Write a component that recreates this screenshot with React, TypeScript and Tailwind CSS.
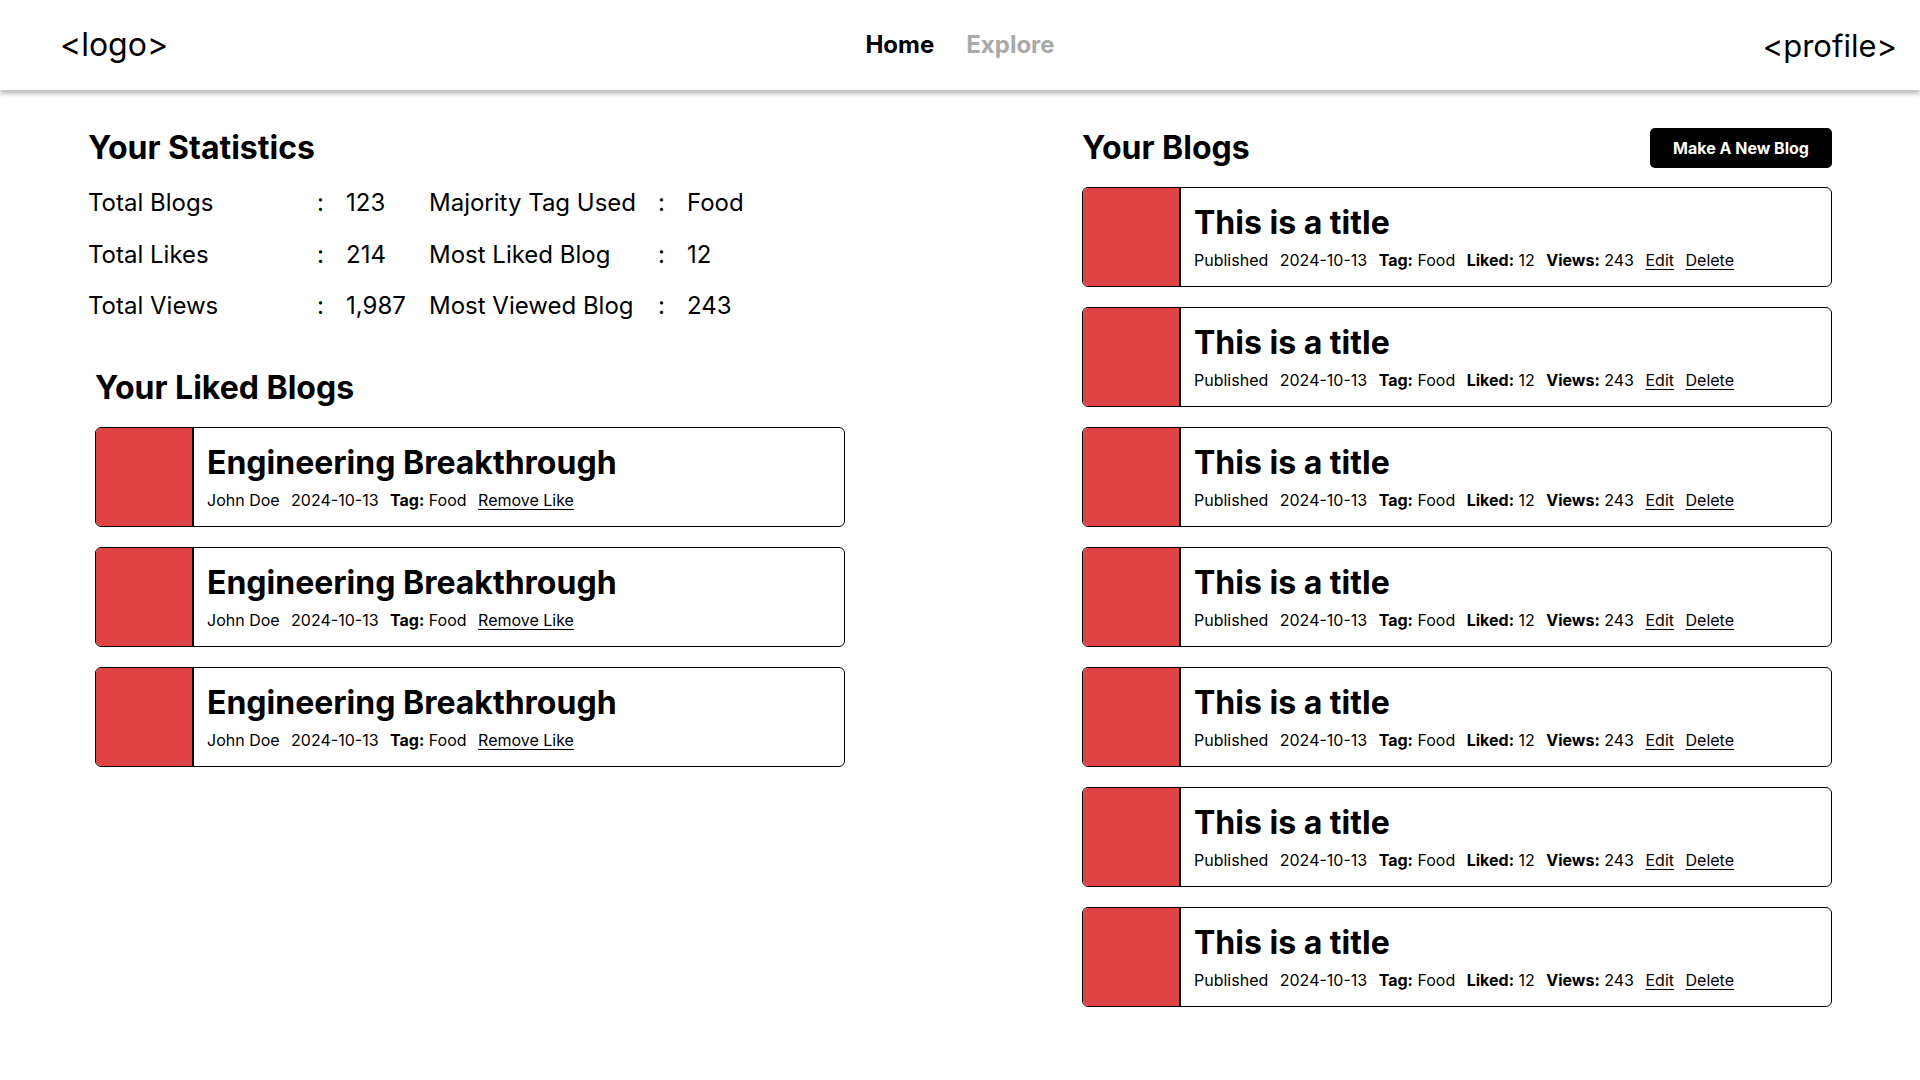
const stats = [
  ['Total Blogs', '123', 'Majority Tag Used', 'Food'],
  ['Total Likes', '214', 'Most Liked Blog', '12'],
  ['Total Views', '1,987', 'Most Viewed Blog', '243'],
]

function Card({ title, children }: { title: string; children: React.ReactNode }) {
  return (
    <div className="flex h-[100px] overflow-hidden rounded-[6px] border-[1.5px] border-black bg-white">
      <div className="w-[98px] shrink-0 border-r-2 border-black bg-[#e04343]" />
      <div className="flex flex-col pl-[13px] pt-[15px]">
        <h3 className="text-[32px] font-bold leading-[40px] text-black">{title}</h3>
        <div className="mt-[7px] flex items-center gap-[11.5px] text-[16px] leading-[20px] text-black">{children}</div>
      </div>
    </div>
  )
}

function LikedCard() {
  return (
    <Card title="Engineering Breakthrough">
      <span>John Doe</span>
      <span>2024-10-13</span>
      <span>
        <b className="font-bold">Tag:</b> Food
      </span>
      <a className="underline underline-offset-[3px]">Remove Like</a>
    </Card>
  )
}

function BlogCard() {
  return (
    <Card title="This is a title">
      <span>Published</span>
      <span>2024-10-13</span>
      <span>
        <b className="font-bold">Tag:</b> Food
      </span>
      <span>
        <b className="font-bold">Liked:</b> 12
      </span>
      <span>
        <b className="font-bold">Views:</b> 243
      </span>
      <a className="underline underline-offset-[3px]">Edit</a>
      <a className="underline underline-offset-[3px]">Delete</a>
    </Card>
  )
}

export default function App() {
  return (
    <div className="min-h-screen bg-white font-['Inter',sans-serif] text-black">
      <header className="grid h-[90px] grid-cols-[1fr_auto_1fr] items-center bg-white shadow-[0_4px_4px_rgba(0,0,0,0.25)]">
        <div className="ml-[60px] text-[32px] leading-none">&lt;logo&gt;</div>
        <nav className="flex items-center gap-8 text-[24px] font-bold">
          <a className="text-black">Home</a>
          <a className="text-[#a9a9a9]">Explore</a>
        </nav>
        <div className="mr-[23px] justify-self-end text-[31px] leading-none">&lt;profile&gt;</div>
      </header>

      <main className="flex justify-between px-[88px] pt-[38px]">
        <section className="w-[757px]">
          <h2 className="text-[32px] font-bold leading-[40px]">Your Statistics</h2>
          <div className="mt-[9px] grid grid-cols-[229px_29px_83px_229px_29px_auto] text-[24px] leading-[51.5px]">
            {stats.map((r) => (
              <div key={r[0]} className="contents">
                <span>{r[0]}</span>
                <span>:</span>
                <span>{r[1]}</span>
                <span>{r[2]}</span>
                <span>:</span>
                <span>{r[3]}</span>
              </div>
            ))}
          </div>

          <div className="ml-[7px] mt-[36px]">
            <h2 className="text-[32px] font-bold leading-[40px]">Your Liked Blogs</h2>
            <div className="mt-[19px] flex flex-col gap-[20px]">
              <LikedCard />
              <LikedCard />
              <LikedCard />
            </div>
          </div>
        </section>

        <section className="w-[750px]">
          <div className="flex h-[40px] items-center justify-between">
            <h2 className="text-[32px] font-bold leading-[40px]">Your Blogs</h2>
            <button className="h-[40px] w-[182px] rounded-[5px] bg-black text-[16px] font-bold text-white">
              Make A New Blog
            </button>
          </div>
          <div className="mt-[19px] flex flex-col gap-[20px]">
            {Array.from({ length: 7 }).map((_, i) => (
              <BlogCard key={i} />
            ))}
          </div>
        </section>
      </main>
    </div>
  )
}
